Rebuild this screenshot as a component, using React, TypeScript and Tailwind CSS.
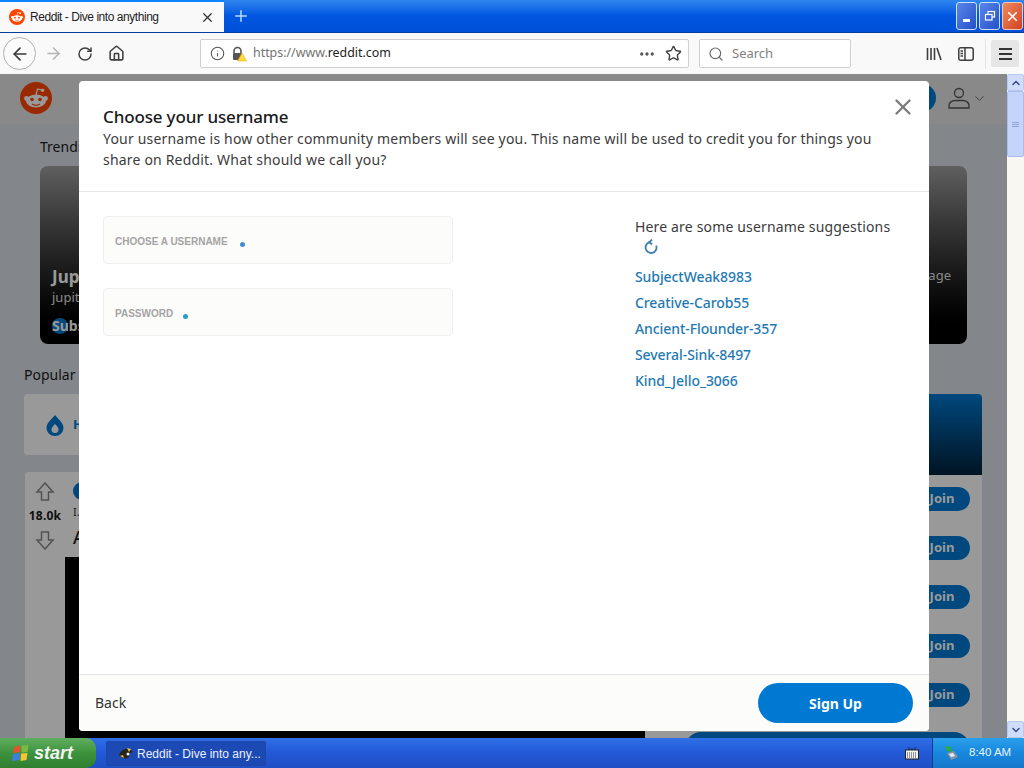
import { ArrowLeft, ArrowRight, ChevronDown, ChevronUp, House, Info, MoreHorizontal, Plus, RotateCw, Search, Star, X } from 'lucide-react';

const suggestions = ['SubjectWeak8983', 'Creative-Carob55', 'Ancient-Flounder-357', 'Several-Sink-8497', 'Kind_Jello_3066'];
const joinRows = [1, 2, 3, 4, 5];

function Snoo({ size }: { size: number }) {
  return (
    <svg width={size} height={size} viewBox="0 0 32 32" className="shrink-0">
      <circle cx="16" cy="16" r="16" fill="#ff4500" />
      <ellipse cx="16" cy="19" rx="10" ry="6.5" fill="#fff" />
      <circle cx="6.5" cy="16.5" r="2.4" fill="#fff" />
      <circle cx="25.5" cy="16.5" r="2.4" fill="#fff" />
      <circle cx="12" cy="17.5" r="1.8" fill="#ff4500" />
      <circle cx="20" cy="17.5" r="1.8" fill="#ff4500" />
      <path d="M12 22c2.4 1.6 5.6 1.6 8 0" stroke="#ff4500" strokeWidth="1.1" fill="none" />
      <path d="M16 13l1.4-6 4.4 1" stroke="#fff" strokeWidth="1.2" fill="none" />
      <circle cx="22.6" cy="8.2" r="1.7" fill="#fff" />
    </svg>
  );
}

function BrowserChrome() {
  return (
    <>
      <div className="flex h-[33px] shrink-0 bg-gradient-to-b from-[#2f86f0] via-[#0055e0] to-[#0050d8] border-b border-[#003c9c]">
        <div className="flex h-[32px] w-[224px] items-center border-t-2 border-[#0a84ff] bg-[#f9f9fa] pl-[9px] pr-[9px]">
          <Snoo size={16} />
          <span className="ml-[5px] flex-1 whitespace-nowrap font-['Liberation_Sans',sans-serif] text-[12px] tracking-[-0.45px] text-[#1e1e1e]">
            Reddit - Dive into anything
          </span>
          <X size={15} strokeWidth={2} className="text-[#333]" />
        </div>
        <div className="flex w-[33px] items-center justify-center">
          <Plus size={18} strokeWidth={2} className="text-[#b8dcff]" />
        </div>
        <div className="flex-1" />
        <div className="flex items-start gap-[2px] pr-[1px] pt-[2px]">
          <div className="flex h-[28px] w-[21px] items-end justify-center rounded-[3px] border border-[#cfe0ff] bg-gradient-to-br from-[#5a86ea] to-[#2450c8] pb-[7px]">
            <div className="h-[3px] w-[7px] bg-white" />
          </div>
          <div className="flex h-[28px] w-[21px] items-center justify-center rounded-[3px] border border-[#cfe0ff] bg-gradient-to-br from-[#5a86ea] to-[#2450c8]">
            <svg width="12" height="12" viewBox="0 0 12 12" fill="none" stroke="#fff">
              <rect x="4" y="1.5" width="6.5" height="5.5" strokeWidth="1.2" />
              <rect x="1.5" y="4.5" width="6.5" height="5.5" fill="#3f68d8" strokeWidth="1.2" />
            </svg>
          </div>
          <div className="flex h-[28px] w-[21px] items-center justify-center rounded-[3px] border border-[#f0c8b8] bg-gradient-to-br from-[#ee8a60] to-[#d0401c]">
            <X size={15} strokeWidth={2.6} className="text-white" />
          </div>
        </div>
      </div>
      <div className="flex h-[41px] shrink-0 items-center bg-[#f9f9fa] pl-[3px] font-['Noto_Sans',sans-serif]">
        <div className="flex h-[33px] w-[33px] items-center justify-center rounded-full border border-[#b1b1b3] bg-[#fbfbfb]">
          <ArrowLeft size={20} strokeWidth={2} className="text-[#3a3a3a]" />
        </div>
        <ArrowRight size={19} strokeWidth={2} className="ml-[8px] text-[#b4b4b4]" />
        <RotateCw size={16} strokeWidth={2.2} className="ml-[14px] text-[#3f3f3f]" />
        <House size={17} strokeWidth={2.2} className="ml-[15px] text-[#3f3f3f]" />
        <div className="ml-[75px] flex h-[29px] w-[489px] items-center rounded-[2px] border border-[#cfcfd1] bg-white pl-[9px] pr-[6px]">
          <Info size={15} strokeWidth={1.7} className="text-[#555]" />
          <svg width="16" height="16" viewBox="0 0 16 16" className="ml-[6px]">
            <path d="M3 7V5a3.5 3.5 0 0 1 7 0v2" stroke="#555" strokeWidth="1.6" fill="none" />
            <rect x="2" y="7" width="9" height="7" rx="1" fill="#555" />
            <path d="M11 7l4.5 8h-9z" fill="#ffd93b" stroke="#d9a400" strokeWidth=".5" />
          </svg>
          <span className="ml-[6px] flex-1 text-[12.4px] text-[#737373]">
            https://www.<span className="text-[#222]">reddit.com</span>
          </span>
          <MoreHorizontal size={18} strokeWidth={2.4} className="text-[#555]" />
          <Star size={17} strokeWidth={2} className="ml-[9px] text-[#444]" />
        </div>
        <div className="ml-[10px] flex h-[29px] w-[152px] items-center rounded-[2px] border border-[#cfcfd1] bg-white pl-[8px]">
          <Search size={16} strokeWidth={1.8} className="text-[#6a6a6a]" />
          <span className="ml-[8px] text-[13px] text-[#808080]">Search</span>
        </div>
        <svg width="16" height="16" viewBox="0 0 16 16" className="ml-[75px]" stroke="#3f3f3f" strokeWidth="1.6" fill="none">
          <path d="M1.5 2v12M5 2v12M8.5 2v12M11 2l4 12" />
        </svg>
        <svg width="16" height="14" viewBox="0 0 16 14" className="ml-[16px]" stroke="#3f3f3f" strokeWidth="1.5" fill="none">
          <rect x=".8" y=".8" width="14.4" height="12.4" rx="2" />
          <path d="M7 1v12M2.5 4H5M2.5 6.5H5M2.5 9H5" />
        </svg>
        <div className="ml-[11px] h-[30px] w-px bg-[#e4e4e4]" />
        <div className="ml-[5px] flex h-[27px] w-[28px] flex-col items-center justify-center gap-[3px] rounded-[2px] bg-[#e6e6e7]">
          <div className="h-[2px] w-[13px] bg-[#333]" />
          <div className="h-[2px] w-[13px] bg-[#333]" />
          <div className="h-[2px] w-[13px] bg-[#333]" />
        </div>
      </div>
    </>
  );
}

function RedditPage() {
  return (
    <div className="h-full overflow-hidden bg-[#dae0e6] font-['Noto_Sans',sans-serif]">
      <div className="flex h-[50px] items-center justify-between bg-[#e4e4e4] pb-[2px] pl-[20px] pr-[20px]">
        <Snoo size={32} />
        <div className="flex items-center">
          <div className="h-[28px] w-[30px] rounded-full bg-[#0079d3]" />
          <svg width="24" height="24" viewBox="0 0 24 24" fill="none" stroke="#555" strokeWidth="1.3" className="ml-[11px]">
            <circle cx="12" cy="7" r="4.5" />
            <path d="M2 22v-2.5c0-3 3-5 6-5h8c3 0 6 2 6 5V22z" />
          </svg>
          <ChevronDown size={15} strokeWidth={1.5} className="ml-[1px] text-[#666]" />
        </div>
      </div>
      <div className="pl-[24px] pr-[25px] pt-[13px]">
        <div className="pl-[16px] text-[14px] leading-[20px] text-[#1c1c1c]">Trending today</div>
        <div className="ml-[16px] mr-[15px] mt-[9px] flex h-[178px] items-center justify-between rounded-[8px] bg-gradient-to-b from-[#a0a0a0] to-[#000] pl-[12px] pr-[16px]">
          <div className="mt-[92px]">
            <div className="text-[17px] font-bold leading-[22px] text-white">Jupiter</div>
            <div className="text-[13px] leading-[18px] text-[#e0e0e0]">jupiter</div>
            <div className="mt-[9px] flex items-center text-[14px] font-bold text-white">
              <span className="h-[16px] w-[16px] shrink-0 rounded-full bg-[#0079d3]" />
              <span className="-ml-[16px]">Subscribe</span>
            </div>
          </div>
          <div className="mt-[42px] text-[13px] text-[#e0e0e0]">Homepage</div>
        </div>
        <div className="mt-[21px] text-[14px] leading-[20px] text-[#1c1c1c]">Popular posts</div>
        <div className="mt-[9px] flex">
          <div className="w-[621px] shrink-0">
            <div className="flex h-[61px] items-center rounded-[4px] bg-white pl-[21px]">
              <svg width="20" height="22" viewBox="0 0 20 22">
                <path d="M10 1C6 6 1.500 9 1.500 14a8.500 8 0 0 0 17 0C18.500 9 14 6 10 1z" fill="#0079d3" />
                <path d="M10 10c-2 2-3.500 3.500-3.500 5.500a3.500 3.500 0 0 0 7 0C13.500 13.500 12 12 10 10z" fill="#fff" />
              </svg>
              <span className="ml-[8px] text-[13px] font-bold text-[#0079d3]">Hot</span>
            </div>
            <div className="ml-px mt-[17px] flex h-[280px] rounded-[4px] bg-white">
              <div className="flex w-[40px] shrink-0 flex-col items-center pt-[9px]">
                <svg width="20" height="22" viewBox="0 0 20 22" fill="none" stroke="#878a8c" strokeWidth="1.5">
                  <path d="M10 2L2 11h4.500v8h7v-8H18z" />
                </svg>
                <div className="mt-[5px] text-[12px] font-bold leading-[16px] tracking-[0.2px] text-[#1a1a1b]">18.0k</div>
                <svg width="20" height="22" viewBox="0 0 20 22" fill="none" stroke="#878a8c" strokeWidth="1.5" className="mt-[5px]">
                  <path d="M10 20L2 11h4.500V3h7v8H18z" />
                </svg>
              </div>
              <div className="flex-1">
                <div className="ml-[8px] mt-[10px] h-[18px] w-[18px] rounded-full bg-[#0079d3]" />
                <div className="ml-[8px] mt-[4px] text-[11px] leading-[16px] text-[#333]">I.redd.it</div>
                <div className="ml-[8px] mt-[5px] text-[18px] font-medium leading-[24px] text-[#222]">A</div>
                <div className="mt-[8px] h-[200px] w-[580px] bg-black" />
              </div>
            </div>
          </div>
          <div className="flex-1 overflow-hidden rounded-[4px] bg-white">
            <div className="h-[81px] bg-gradient-to-b from-[#0079d3] to-[#00223c]" />
            <div className="flex flex-col gap-[25px] pt-[12px]">
              {joinRows.map((row) => (
                <div key={row} className="flex justify-end pr-[12px]">
                  <div className="flex h-[24px] w-[56px] items-center justify-center rounded-full bg-[#0079d3] text-[13px] font-bold text-white">
                    Join
                  </div>
                </div>
              ))}
              <div className="ml-[40px] mr-[12px] h-[32px] rounded-full bg-[#0079d3]" />
            </div>
          </div>
        </div>
      </div>
    </div>
  );
}

function SignupModal() {
  return (
    <div className="absolute left-[79px] top-[7px] flex h-[650px] w-[850px] flex-col rounded-[4px] bg-white font-['Noto_Sans',sans-serif]">
      <X size={26} strokeWidth={2.2} className="absolute right-[13px] top-[13px] text-[#7c7c7c]" />
      <div className="border-b border-[#e6e6e6] pb-[21px] pl-[24px] pr-[50px] pt-[25px]">
        <div className="text-[17px] font-medium leading-[22px] tracking-[-0.15px] text-[#1a1a1b]">Choose your username</div>
        <div className="text-[14px] leading-[21px] tracking-[0.19px] text-[#3c3c3c]">
          Your username is how other community members will see you. This name will be used to credit you for things you
          share on Reddit. What should we call you?
        </div>
      </div>
      <div className="flex flex-1 pl-[24px] pt-[24px]">
        <div className="flex w-[350px] flex-col gap-[24px]">
          <div className="flex h-[48px] items-center rounded-[4px] border border-[#edeff1] bg-[#fcfcfb] pl-[11px]">
            <span className="mt-[2px] font-['Liberation_Sans',sans-serif] text-[10px] font-bold uppercase text-[#a5a4a4]">Choose a username</span>
            <span className="ml-[12px] mt-[8px] h-[5px] w-[5px] rounded-full bg-[#3f8fd0]" />
          </div>
          <div className="flex h-[48px] items-center rounded-[4px] border border-[#edeff1] bg-[#fcfcfb] pl-[11px]">
            <span className="mt-[2px] font-['Liberation_Sans',sans-serif] text-[10px] font-bold uppercase text-[#a5a4a4]">Password</span>
            <span className="ml-[10px] mt-[8px] h-[5px] w-[5px] rounded-full bg-[#2e9bc8]" />
          </div>
        </div>
        <div className="ml-[182px] w-[270px]">
          <div className="text-[14px] leading-[22px] tracking-[0.16px] text-[#3c3c3c]">Here are some username suggestions</div>
          <svg width="16" height="16" viewBox="0 0 16 16" fill="none" stroke="#3f82b0" strokeWidth="1.8" className="ml-[8px] mt-[1px]">
            <path d="M8 3a5.500 5.500 0 1 0 5.200 3.500" />
            <path d="M9 .5L6.500 3 9 5.500" />
          </svg>
          <div className="mt-[12px] flex flex-col gap-[6px]">
            {suggestions.map((name) => (
              <div key={name} className="text-[14px] font-medium leading-[20px] tracking-[-0.08px] text-[#1f7ab3]">
                {name}
              </div>
            ))}
          </div>
        </div>
      </div>
      <div className="flex h-[57px] items-center justify-between rounded-b-[4px] border-t border-[#e6e6e6] bg-[#fcfcfb] pl-[16px] pr-[16px]">
        <span className="mb-px text-[14px] text-[#333]">Back</span>
        <div className="flex h-[40px] w-[155px] items-center justify-center rounded-full bg-[#0079d3] text-[14px] font-bold text-white">
          Sign Up
        </div>
      </div>
    </div>
  );
}

function Scrollbar() {
  return (
    <div className="flex w-[17px] shrink-0 flex-col bg-[#f8f7f2]">
      <div className="flex h-[17px] items-center justify-center rounded-[2px] border border-[#b8c8f0] bg-[#cfdcfb]">
        <ChevronUp size={12} strokeWidth={3} className="text-[#3a4a8c]" />
      </div>
      <div className="flex h-[66px] flex-col items-center justify-center gap-[1px] rounded-[2px] border border-[#a8bcf0] bg-[#c4d4fb]">
        <div className="h-px w-[7px] bg-[#8ea4dc]" />
        <div className="h-px w-[7px] bg-[#8ea4dc]" />
        <div className="h-px w-[7px] bg-[#8ea4dc]" />
      </div>
      <div className="flex-1" />
      <div className="flex h-[17px] items-center justify-center rounded-[2px] border border-[#b8c8f0] bg-[#cfdcfb]">
        <ChevronDown size={12} strokeWidth={3} className="text-[#3a4a8c]" />
      </div>
    </div>
  );
}

function Taskbar() {
  return (
    <div className="flex h-[30px] shrink-0 items-stretch bg-gradient-to-b from-[#2f6fe8] via-[#2358d6] to-[#1f4fc4] font-['Liberation_Sans',sans-serif]">
      <div className="flex w-[96px] items-center rounded-r-[10px] bg-gradient-to-b from-[#5fae5f] via-[#3d923d] to-[#2f7f2f] pl-[11px]">
        <svg width="19" height="18" viewBox="0 0 19 18">
          <path d="M3 3l6-1.500v6.500l-7 1z" fill="#e5532d" />
          <path d="M10.500 1.500l7-.5-1 7-6 .5z" fill="#7cba3f" />
          <path d="M2 10l6.800-1-.5 7-7.300 1z" fill="#3f7fe0" />
          <path d="M10 9.500l6.500-.5-1 7-6 1z" fill="#f4c534" />
        </svg>
        <span className="ml-[4px] text-[18px] font-bold italic leading-none text-[#f4f4f4]">start</span>
      </div>
      <div className="ml-[10px] mt-[3px] flex h-[25px] w-[160px] items-center rounded-[2px] border border-[#1c47a8] bg-[#1d49b4] pl-[11px]">
        <svg width="16" height="14" viewBox="0 0 16 14" className="shrink-0">
          <path d="M1 8c2-5 6-7 10-6l4 3-3 1-1 4c-3 2-7 2-10-2z" fill="#2a2416" />
          <path d="M9 1l4 1-2 3zM2 9l3-1 1 3z" fill="#e8c24a" />
          <circle cx="10" cy="7" r="1.500" fill="#f4f4f4" />
        </svg>
        <span className="ml-[3px] whitespace-nowrap text-[12px] text-[#eaf0ff]">Reddit - Dive into any...</span>
      </div>
      <div className="flex-1" />
      <div className="flex w-[27px] items-center">
        <svg width="14" height="13" viewBox="0 0 14 13">
          <path d="M4 3V0M7 3V1M10 3V0" stroke="#1c2a50" strokeWidth="1" />
          <rect x=".5" y="3" width="13" height="9" fill="#f2f2f2" stroke="#222" />
          <path d="M2 6h10M2 8h10M2 10h10" stroke="#333" strokeDasharray="1 1" />
        </svg>
      </div>
      <div className="flex w-[92px] items-center border-l border-[#143a8e] bg-gradient-to-b from-[#2aa0ec] via-[#1787de] to-[#1578cc] pl-[11px]">
        <svg width="15" height="17" viewBox="0 0 15 17" className="shrink-0">
          <path d="M1 1l6 1 1 5-5-1z" fill="#2faa3f" />
          <path d="M3 8l7-2 4 6-7 3z" fill="#8a93a8" />
          <path d="M5 9l4-1 2 3-4 1z" fill="#e8ecf4" />
        </svg>
        <span className="ml-[10px] whitespace-nowrap text-[11.5px] text-[#eaf4ff]">8:40 AM</span>
      </div>
    </div>
  );
}

export default function App() {
  return (
    <div className="flex h-screen w-[1024px] flex-col overflow-hidden">
      <BrowserChrome />
      <div className="flex min-h-0 flex-1">
        <div className="relative min-w-0 flex-1">
          <RedditPage />
          <div className="absolute inset-0 bg-black/40" />
          <SignupModal />
        </div>
        <Scrollbar />
      </div>
      <Taskbar />
    </div>
  );
}
